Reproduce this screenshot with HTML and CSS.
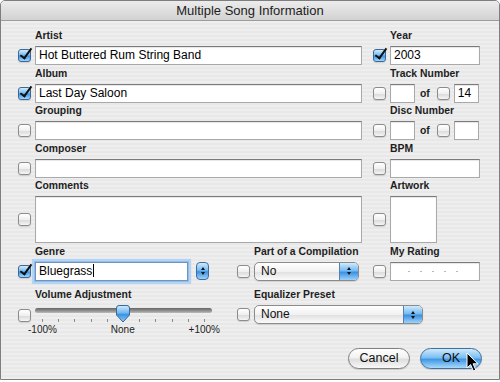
FILE: index.html
```html
<!DOCTYPE html>
<html lang="en">
<head>
    <meta charset="UTF-8">
    <meta name="viewport" content="width=device-width, initial-scale=1.0">
    <title>Multiple Song Information</title>
    <link rel="stylesheet" href="styles.css">
</head>
<body>
    <div class="window">
        <div class="titlebar">Multiple Song Information</div>

        <div class="content">
            <div class="form">
                <!-- artist / year -->
                <div class="group wide">
                    <div class="label">Artist</div>
                    <div class="row">
                        <span class="cb checked"></span>
                        <div class="field main">Hot Buttered Rum String Band</div>
                    </div>
                </div>
                <div class="group">
                    <div class="label">Year</div>
                    <div class="row">
                        <span class="cb checked"></span>
                        <div class="field side">2003</div>
                    </div>
                </div>

                <!-- album / track number -->
                <div class="group wide">
                    <div class="label">Album</div>
                    <div class="row">
                        <span class="cb checked"></span>
                        <div class="field main">Last Day Saloon</div>
                    </div>
                </div>
                <div class="group">
                    <div class="label">Track Number</div>
                    <div class="row">
                        <span class="cb"></span>
                        <div class="field num"></div>
                        <span class="of">of</span>
                        <span class="cb"></span>
                        <div class="field num">14</div>
                    </div>
                </div>

                <!-- grouping / disc number -->
                <div class="group wide">
                    <div class="label">Grouping</div>
                    <div class="row">
                        <span class="cb"></span>
                        <div class="field main"></div>
                    </div>
                </div>
                <div class="group">
                    <div class="label">Disc Number</div>
                    <div class="row">
                        <span class="cb"></span>
                        <div class="field num"></div>
                        <span class="of">of</span>
                        <span class="cb"></span>
                        <div class="field num"></div>
                    </div>
                </div>

                <!-- composer / bpm -->
                <div class="group wide">
                    <div class="label">Composer</div>
                    <div class="row">
                        <span class="cb"></span>
                        <div class="field main"></div>
                    </div>
                </div>
                <div class="group">
                    <div class="label">BPM</div>
                    <div class="row">
                        <span class="cb"></span>
                        <div class="field side"></div>
                    </div>
                </div>

                <!-- comments / artwork -->
                <div class="group wide">
                    <div class="label">Comments</div>
                    <div class="row tall">
                        <span class="cb"></span>
                        <div class="field main tall"></div>
                    </div>
                </div>
                <div class="group">
                    <div class="label">Artwork</div>
                    <div class="row tall">
                        <span class="cb"></span>
                        <div class="field artwork"></div>
                    </div>
                </div>

                <!-- genre / compilation / rating -->
                <div class="group">
                    <div class="label">Genre</div>
                    <div class="row">
                        <span class="cb checked"></span>
                        <div class="field genre">Bluegrass<span class="caret"></span></div>
                        <div class="stepper">
                            <span class="up"></span>
                            <span class="down"></span>
                        </div>
                    </div>
                </div>
                <div class="group">
                    <div class="label">Part of a Compilation</div>
                    <div class="row">
                        <span class="cb"></span>
                        <div class="popup compilation">
                            <span class="popup-text">No</span>
                            <span class="popup-arrows"><span class="up"></span><span class="down"></span></span>
                        </div>
                    </div>
                </div>
                <div class="group">
                    <div class="label">My Rating</div>
                    <div class="row">
                        <span class="cb"></span>
                        <div class="field side rating">
                            <span></span><span></span><span></span><span></span><span></span>
                        </div>
                    </div>
                </div>

                <!-- volume / equalizer -->
                <div class="group volume">
                    <div class="label">Volume Adjustment</div>
                    <div class="row slider-row">
                        <span class="cb"></span>
                        <div class="slider">
                            <div class="track">
                                <svg class="thumb" width="14" height="18" viewBox="0 0 14 18">
                                    <defs>
                                        <linearGradient id="thumbFill" x1="0" y1="0" x2="0" y2="1">
                                            <stop offset="0" stop-color="#d4ecfd"/>
                                            <stop offset="0.45" stop-color="#6fb6f0"/>
                                            <stop offset="0.55" stop-color="#3d92e2"/>
                                            <stop offset="1" stop-color="#8fcdf8"/>
                                        </linearGradient>
                                    </defs>
                                    <path d="M3 0.5 H11 Q13.5 0.5 13.5 3 V10 L7 17 L0.5 10 V3 Q0.5 0.5 3 0.5 Z" fill="url(#thumbFill)" stroke="#3c6796" stroke-width="1"/>
                                </svg>
                            </div>
                            <div class="ticks">
                                <span></span><span></span><span></span><span></span><span></span><span></span>
                                <span></span><span></span><span></span><span></span><span></span>
                            </div>
                            <div class="tick-labels">
                                <span>-100%</span>
                                <span>None</span>
                                <span>+100%</span>
                            </div>
                        </div>
                    </div>
                </div>
                <div class="group volume eq">
                    <div class="label">Equalizer Preset</div>
                    <div class="row">
                        <span class="cb"></span>
                        <div class="popup equalizer">
                            <span class="popup-text">None</span>
                            <span class="popup-arrows"><span class="up"></span><span class="down"></span></span>
                        </div>
                    </div>
                </div>
            </div>

            <div class="buttons">
                <div class="btn">Cancel</div>
                <div class="btn default">OK</div>
            </div>
        </div>

        <svg class="pointer" width="14" height="21" viewBox="0 0 14 21">
            <path d="M1 1 V16 L4.6 12.6 L7.4 19 L9.8 18 L7.1 11.8 H12 Z" fill="#000" stroke="#fff" stroke-width="1" stroke-linejoin="round"/>
        </svg>
    </div>
</body>
</html>
```

FILE: styles.css
```css
body {
    margin: 0;
    background-color: #ffffff;
    font-family: "Liberation Sans", Arial, sans-serif;
    color: #111;
}
.window {
    position: relative;
    width: 500px;
    height: 380px;
    box-sizing: border-box;
    border: 1px solid #7e7e7e;
    border-radius: 5px 5px 0 0;
    background: repeating-linear-gradient(#eeeeee 0, #eeeeee 2px, #e8e8e8 2px, #e8e8e8 4px);
    overflow: hidden;
}
.titlebar {
    height: 19px;
    line-height: 20px;
    text-align: center;
    font-size: 13px;
    color: #1c1c1c;
    background: linear-gradient(#ececec, #d2d2d2);
    border-bottom: 1px solid #9c9c9c;
}
.content {
    padding: 9px 17px 0 17px;
}
.form {
    display: grid;
    grid-template-columns: 219px 136px 107px;
    row-gap: 2.5px;
}
.wide, .eq {
    grid-column: span 2;
}
.volume {
    margin-top: 6px;
}
.label {
    height: 12px;
    line-height: 12px;
    margin-bottom: 4px;
    padding-left: 17px;
    font-size: 10.4px;
    font-weight: bold;
    color: #1e1e1e;
    white-space: nowrap;
}
.row {
    display: flex;
    align-items: center;
    gap: 4px;
    height: 19px;
}
.row.tall {
    height: 47px;
}

/* checkboxes */
.cb {
    position: relative;
    flex-shrink: 0;
    width: 13px;
    height: 13px;
    box-sizing: border-box;
    border: 1px solid #8c8c8c;
    border-radius: 3px;
    background: linear-gradient(#ffffff, #f0f0f0 50%, #dcdcdc 60%, #f6f6f6);
    box-shadow: 0 1px 1px rgba(0,0,0,0.12);
}
.cb.checked {
    border-color: #3a6899;
    background: linear-gradient(#d2ebfc, #78bcf2 45%, #3f93e2 55%, #a2d6fb);
}
.cb.checked::after {
    content: '';
    position: absolute;
    left: 4px;
    top: -4px;
    width: 4px;
    height: 11px;
    border: solid #101010;
    border-width: 0 2.5px 2.5px 0;
    transform: rotate(36deg);
}

/* text fields */
.field {
    flex-shrink: 0;
    height: 19px;
    box-sizing: border-box;
    padding: 0 3px;
    border: 1px solid #a9a9a9;
    border-top-color: #7b7b7b;
    background-color: #ffffff;
    box-shadow: inset 0 1px 1px rgba(0,0,0,0.1);
    font-size: 12px;
    line-height: 17px;
    color: #000;
    white-space: nowrap;
}
.field.main { width: 327px; }
.field.side { width: 90px; }
.field.num { width: 25px; }
.field.tall { height: 47px; }
.field.artwork {
    width: 47px;
    height: 47px;
}
.of {
    margin: 0 3px 0 1px;
    font-size: 10.4px;
    font-weight: bold;
    color: #1e1e1e;
}
.field.genre {
    width: 153px;
    border-color: #6d95c4;
    box-shadow: 0 0 0 1px #95bde8, 0 0 1px 3px #b5d3f2;
}
.caret {
    display: inline-block;
    width: 1px;
    height: 13px;
    margin-left: 1px;
    vertical-align: -2px;
    background-color: #000;
}
.rating {
    display: flex;
    align-items: center;
    gap: 10px;
    padding-left: 17px;
}
.rating span {
    width: 2px;
    height: 1px;
    background-color: #b8b8b8;
}

/* popups and stepper */
.stepper, .popup-arrows {
    display: flex;
    flex-direction: column;
    align-items: center;
    justify-content: center;
    gap: 2px;
    background: linear-gradient(#d0eafc, #76bbf2 45%, #3d91e1 55%, #9bd3fb);
}
.stepper {
    width: 13px;
    height: 18px;
    margin-left: 4px;
    box-sizing: border-box;
    border: 1px solid #3e6c9e;
    border-radius: 4px;
}
.up, .down {
    width: 0;
    height: 0;
    border-left: 2.5px solid transparent;
    border-right: 2.5px solid transparent;
}
.up { border-bottom: 3px solid #111; }
.down { border-top: 3px solid #111; }
.popup {
    display: flex;
    height: 19px;
    box-sizing: border-box;
    border: 1px solid #8b8b8b;
    border-radius: 5px;
    background: linear-gradient(#ffffff, #f1f1f1 50%, #e2e2e2 55%, #fafafa);
    box-shadow: 0 1px 1px rgba(0,0,0,0.12);
    overflow: hidden;
}
.popup.compilation { width: 105px; }
.popup.equalizer { width: 169px; }
.popup-text {
    flex: 1;
    padding-left: 6px;
    font-size: 12px;
    line-height: 17px;
}
.popup-arrows {
    width: 18px;
    border-left: 1px solid #5580b0;
}

/* volume slider */
.slider-row {
    align-items: flex-start;
    height: auto;
}
.slider-row .cb {
    margin-top: 4px;
}
.slider {
    width: 177px;
    padding-top: 3px;
}
.track {
    position: relative;
    height: 5px;
    border-radius: 3px;
    background: linear-gradient(#666666, #949494 60%, #bdbdbd);
}
.thumb {
    position: absolute;
    left: 81px;
    top: -3px;
}
.ticks {
    display: flex;
    justify-content: space-between;
    height: 3px;
    margin-top: 6px;
    padding: 0 7px;
}
.ticks span {
    width: 1px;
    background-color: #8a8a8a;
}
.tick-labels {
    display: flex;
    justify-content: space-between;
    margin: 2px -8px 0 -7px;
    font-size: 10px;
    line-height: 12px;
    color: #222;
}

/* buttons */
.buttons {
    display: flex;
    justify-content: flex-end;
    gap: 10px;
    margin-top: 12px;
}
.btn {
    width: 62px;
    height: 21px;
    box-sizing: border-box;
    border: 1px solid #808080;
    border-radius: 11px;
    background: linear-gradient(#ffffff, #f2f2f2 45%, #dedede 55%, #f8f8f8);
    box-shadow: 0 1px 1px rgba(0,0,0,0.15);
    text-align: center;
    font-size: 12.5px;
    line-height: 19px;
    color: #111;
}
.btn.default {
    border-color: #41709f;
    background: linear-gradient(#cfe9fc, #7bbff3 45%, #4198e5 55%, #a8dafc);
}
.pointer {
    position: absolute;
    left: 465px;
    top: 351px;
}
```
